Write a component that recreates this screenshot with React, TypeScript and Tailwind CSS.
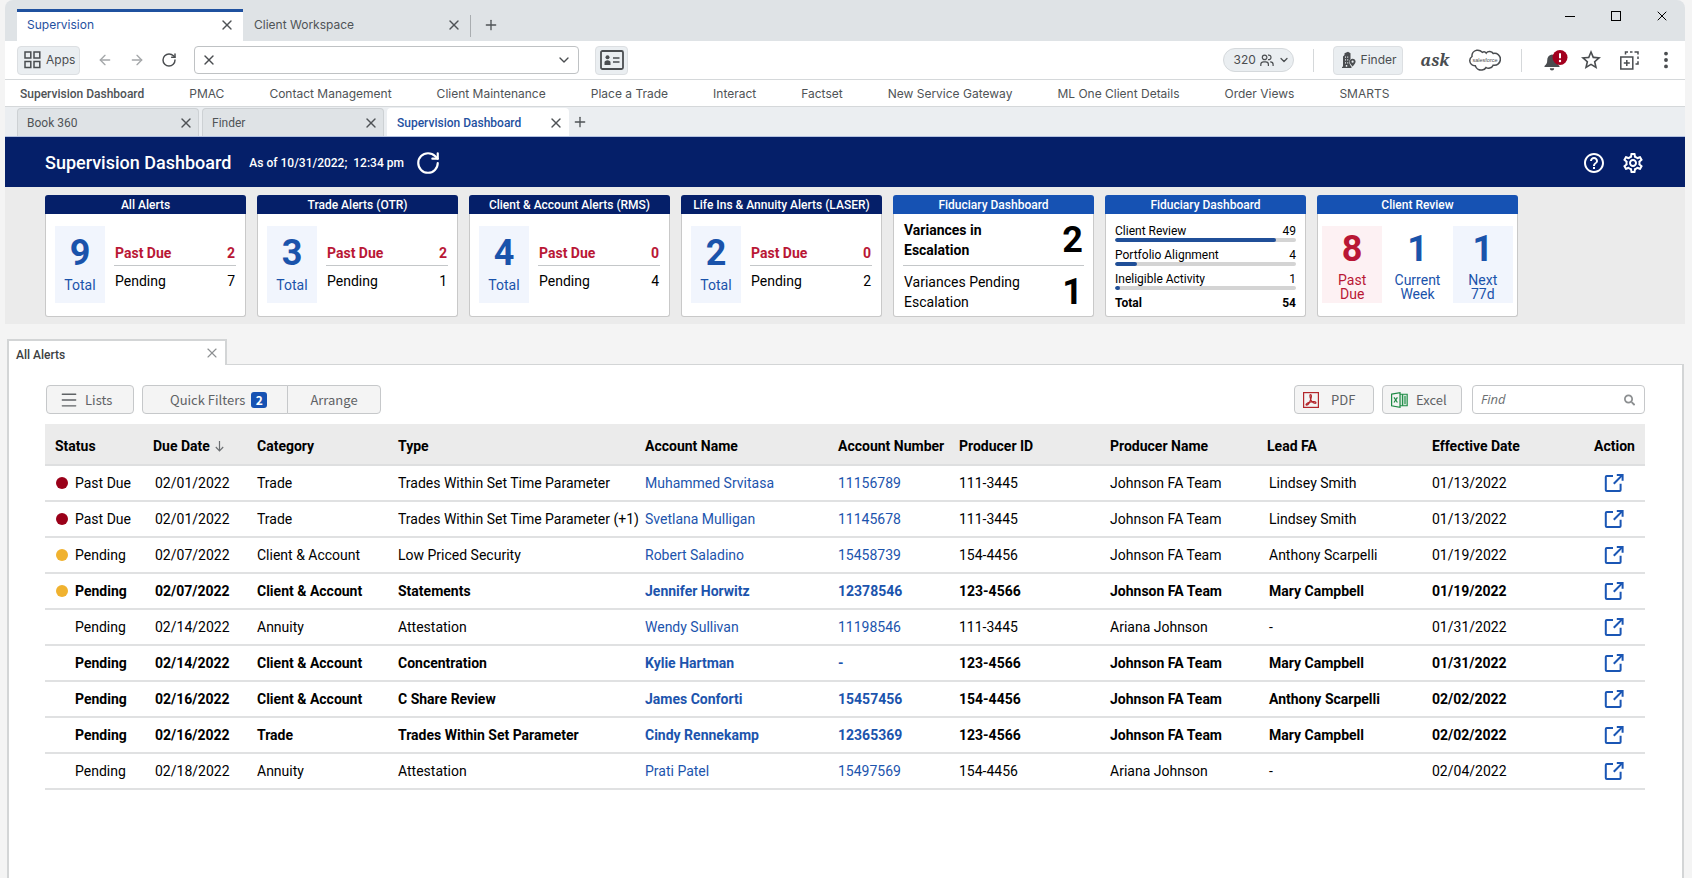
import { useState, type ReactNode } from "react";
import { ArrowLeft, ArrowRight, ChevronDown, Menu, MoreVertical, Plus, RotateCw, X } from "lucide-react";
import { MdHelpOutline, MdOutlineSettings, MdStarBorder } from "react-icons/md";
import { FaSearch } from "react-icons/fa";

interface AlertSummary {
  title: string;
  total: number;
  pastDue: number;
  pending: number;
}

interface AlertRow {
  status: "Past Due" | "Pending";
  dot?: "red" | "amber";
  due: string;
  category: string;
  type: string;
  account: string;
  number: string;
  producerId: string;
  producer: string;
  lead: string;
  effective: string;
  unread?: boolean;
}

const NAV_LINKS = [
  "Supervision Dashboard",
  "PMAC",
  "Contact Management",
  "Client Maintenance",
  "Place a Trade",
  "Interact",
  "Factset",
  "New Service Gateway",
  "ML One Client Details",
  "Order Views",
  "SMARTS",
];

const PAGE_TABS = ["Book 360", "Finder", "Supervision Dashboard"];

const SUMMARIES: AlertSummary[] = [
  { title: "All Alerts", total: 9, pastDue: 2, pending: 7 },
  { title: "Trade Alerts (OTR)", total: 3, pastDue: 2, pending: 1 },
  { title: "Client & Account Alerts (RMS)", total: 4, pastDue: 0, pending: 4 },
  { title: "Life Ins & Annuity Alerts (LASER)", total: 2, pastDue: 0, pending: 2 },
];

const FIDUCIARY_BARS = [
  { label: "Client Review", value: 49, percent: 89 },
  { label: "Portfolio Alignment", value: 4, percent: 12 },
  { label: "Ineligible Activity", value: 1, percent: 3 },
];

const REVIEW_TILES = [
  { value: 8, lines: ["Past", "Due"], tone: "bg-[#fdf1f3] text-[#b91735]" },
  { value: 1, lines: ["Current", "Week"], tone: "text-[#1a53ab]" },
  { value: 1, lines: ["Next", "77d"], tone: "bg-[#f1f5fd] text-[#1a53ab]" },
];

const COLUMNS = [
  { label: "Status", width: "w-[98px]" },
  { label: "Due Date", width: "w-[104px]" },
  { label: "Category", width: "w-[141px]" },
  { label: "Type", width: "w-[247px]" },
  { label: "Account Name", width: "w-[193px]" },
  { label: "Account Number", width: "w-[121px]" },
  { label: "Producer ID", width: "w-[151px]" },
  { label: "Producer Name", width: "w-[157px]" },
  { label: "Lead FA", width: "w-[165px]" },
  { label: "Effective Date", width: "w-[162px]" },
  { label: "Action", width: "w-[61px]" },
];

const ROWS: AlertRow[] = [
  { status: "Past Due", dot: "red", due: "02/01/2022", category: "Trade", type: "Trades Within Set Time Parameter", account: "Muhammed Srvitasa", number: "11156789", producerId: "111-3445", producer: "Johnson FA Team", lead: "Lindsey Smith", effective: "01/13/2022" },
  { status: "Past Due", dot: "red", due: "02/01/2022", category: "Trade", type: "Trades Within Set Time Parameter (+1)", account: "Svetlana Mulligan", number: "11145678", producerId: "111-3445", producer: "Johnson FA Team", lead: "Lindsey Smith", effective: "01/13/2022" },
  { status: "Pending", dot: "amber", due: "02/07/2022", category: "Client & Account", type: "Low Priced Security", account: "Robert Saladino", number: "15458739", producerId: "154-4456", producer: "Johnson FA Team", lead: "Anthony Scarpelli", effective: "01/19/2022" },
  { status: "Pending", dot: "amber", due: "02/07/2022", category: "Client & Account", type: "Statements", account: "Jennifer Horwitz", number: "12378546", producerId: "123-4566", producer: "Johnson FA Team", lead: "Mary Campbell", effective: "01/19/2022", unread: true },
  { status: "Pending", due: "02/14/2022", category: "Annuity", type: "Attestation", account: "Wendy Sullivan", number: "11198546", producerId: "111-3445", producer: "Ariana Johnson", lead: "-", effective: "01/31/2022" },
  { status: "Pending", due: "02/14/2022", category: "Client & Account", type: "Concentration", account: "Kylie Hartman", number: "-", producerId: "123-4566", producer: "Johnson FA Team", lead: "Mary Campbell", effective: "01/31/2022", unread: true },
  { status: "Pending", due: "02/16/2022", category: "Client & Account", type: "C Share Review", account: "James Conforti", number: "15457456", producerId: "154-4456", producer: "Johnson FA Team", lead: "Anthony Scarpelli", effective: "02/02/2022", unread: true },
  { status: "Pending", due: "02/16/2022", category: "Trade", type: "Trades Within Set Parameter", account: "Cindy Rennekamp", number: "12365369", producerId: "123-4566", producer: "Johnson FA Team", lead: "Mary Campbell", effective: "02/02/2022", unread: true },
  { status: "Pending", due: "02/18/2022", category: "Annuity", type: "Attestation", account: "Prati Patel", number: "15497569", producerId: "154-4456", producer: "Ariana Johnson", lead: "-", effective: "02/04/2022" },
];

function AppsIcon() {
  return (
    <svg width="17" height="18" viewBox="0 0 17 18" fill="none" stroke="currentColor" strokeWidth="1.5">
      <rect x="1" y="1" width="5.8" height="6" />
      <rect x="10" y="1" width="5.8" height="6" />
      <rect x="1" y="10.5" width="5.8" height="6" />
      <rect x="10" y="10.5" width="5.8" height="6" />
    </svg>
  );
}

function ContactCardIcon() {
  return (
    <svg width="24" height="20" viewBox="0 0 24 20" fill="none" stroke="currentColor">
      <rect x="1" y="1" width="22" height="18" rx="1.5" strokeWidth="1.8" />
      <path d="M13 8h6.5M13 12h6.5" strokeWidth="1.6" />
      <circle cx="7.5" cy="7.2" r="2" fill="currentColor" stroke="none" />
      <path d="M4.5 15v-2.4c0-1.4 1.2-2.3 3-2.3s3 .9 3 2.3V15z" fill="currentColor" stroke="none" />
    </svg>
  );
}

function PeopleIcon() {
  return (
    <svg width="14" height="13" viewBox="0 0 14 13" fill="none" stroke="currentColor" strokeWidth="1.2">
      <circle cx="4.6" cy="3.4" r="2.3" />
      <path d="M.8 12v-1.5c0-1.7 1.2-2.7 2.700-2.700h2.200c1.500 0 2.700 1 2.700 2.700V12" />
      <path d="M8 1.200c1.600-.4 3 .7 3 2.200S9.700 6 8 5.600M10.200 7.800c1.700 0 2.900 1.200 2.900 2.700V12" />
    </svg>
  );
}

function BuildingPinIcon() {
  return (
    <svg width="14" height="18" viewBox="0 0 14 18" fill="currentColor">
      <path
        fillRule="evenodd"
        d="M1 5.500 2.500 4V2.200L6 .800l2.500 1.400v5.900a4 4 0 0 0-1.200 3.100c0 1.500 1 3 2.200 4.600V17H0v-1.300h1zM3 5.500h1v1.300H3zm2.200 0h1v1.300h-1zM3 8.300h1v1.300H3zm2.200 0h1v1.300h-1zM3 11.200h1v1.300H3zm2.200 0h1v1.300h-1zM3.800 14h1.400v1.800H3.800z"
      />
      <path
        fillRule="evenodd"
        d="M10.600 7.700c1.700 0 3 1.300 3 2.900 0 1.800-1.500 3.400-3 5-1.500-1.600-3-3.200-3-5 0-1.600 1.300-2.900 3-2.900zm0 1.900a1.100 1.100 0 1 0 0 2.200 1.100 1.100 0 0 0 0-2.200z"
      />
    </svg>
  );
}

function SalesforceLogo() {
  return (
    <svg width="32" height="23" viewBox="0 0 32 23" fill="none">
      <path
        d="M13.300 3.300C11.900 1.800 9.800.900 7.700 1.300 4.600 1.900 2.700 4.600 3 7.500 1.500 8.500.600 10.100.800 12c.200 2.900 2.600 5 5.500 4.700.900 2.700 3.700 4.700 6.800 4.300 1.700-.200 3.200-1.200 4-2.500 1 .700 2.300.900 3.600.600 1.700-.400 2.900-1.500 3.500-2.900 4 .600 7.200-2.100 7.200-6.100 0-3.800-3.400-6.500-7.200-5.600C22.900 2.300 19 1.700 17.200 4.100 16.200 2.600 14.700 2.400 13.300 3.300z"
        stroke="currentColor"
        strokeWidth="1.5"
      />
      <text x="16" y="12.5" textAnchor="middle" fontSize="5.5" fontFamily="Liberation Sans" fill="currentColor">
        salesforce
      </text>
    </svg>
  );
}

function BellIcon() {
  return (
    <svg width="24" height="21" viewBox="0 0 24 21">
      <path d="M8 4.500c-3.300.500-4.800 3-4.800 6 0 2.600-.700 3.800-2.700 5.500v1h15v-1c-2-1.700-2.700-2.900-2.700-5.500 0-3-1.500-5.500-4.800-6z" fill="#4a4d50" />
      <path d="M5.800 18.200h4.400a2.200 2.200 0 0 1-4.400 0z" fill="#4a4d50" />
      <circle cx="16" cy="7.500" r="7.500" fill="#a3001e" />
      <path d="M16 3.300v5" stroke="#fff" strokeWidth="2" />
      <circle cx="16" cy="11" r="1.200" fill="#fff" />
    </svg>
  );
}

function AddWindowIcon() {
  return (
    <svg width="19" height="19" viewBox="0 0 19 19" fill="none" stroke="currentColor" strokeWidth="1.5">
      <rect x=".8" y="6" width="12" height="12" />
      <path d="M3.800 12h6M6.800 9v6" />
      <path d="M5.500 3.500V1H8M10 1h2.500M14.500 1H18v2.500M18 5.500V8M18 10.200V13h-2.500" />
    </svg>
  );
}

function PdfIcon() {
  return (
    <svg width="16" height="16" viewBox="0 0 16 16" fill="none" stroke="#b3262b">
      <rect x=".6" y=".6" width="14.800" height="14.800" strokeWidth="1.2" />
      <path
        d="M7.500 2.500c1.300 0 1 2.300.400 4.200-.700 2.300-2.300 6.200-4.200 6.400-1.400 0-.700-1.900 3-2.900 3.300-.9 6.300-.7 6.300.5 0 1.100-2.400.800-4-1.100C7.300 7.700 6.200 2.500 7.500 2.500z"
        strokeWidth="1.2"
      />
    </svg>
  );
}

function ExcelIcon() {
  return (
    <svg width="17" height="16" viewBox="0 0 17 16" fill="none" stroke="#1e8a45">
      <path d="M9 2.200h7.200v11.600H9" fill="#cfe6d7" strokeWidth="1.1" />
      <path d="M.6 2.200 9 .700v14.600L.600 13.800z" fill="#f4f4f4" strokeWidth="1.2" />
      <path d="M3 5.300l3.400 5.200M6.400 5.300 3 10.500" strokeWidth="1.2" />
      <path d="M11.600 2.200v11.600M14 4v8" strokeWidth="1.1" />
    </svg>
  );
}

function SortDownIcon() {
  return (
    <svg width="9" height="12" viewBox="0 0 9 12" fill="none" stroke="#6c6f72" strokeWidth="1.2">
      <path d="M4.500 1v9.500M.8 7l3.700 3.800L8.200 7" />
    </svg>
  );
}

function OpenIcon() {
  return (
    <svg width="20" height="20" viewBox="0 0 20 20" fill="none" stroke="#1a56b4" strokeWidth="2">
      <path d="M9 3H2.800c-.6 0-1 .4-1 1v13c0 .6.4 1 1 1h12.800c.6 0 1-.4 1-1v-6.200" />
      <path d="M9.800 10.800 17.800 2.600" />
      <path d="M12.800 1.900h5.800v5.900" />
    </svg>
  );
}

function BrowserBar() {
  return (
    <div className="flex h-[41px] items-end justify-between rounded-t-lg bg-[#dfe3e6] pl-3 pr-[15px] text-[#4f5356]">
      <div className="flex items-end">
        <div className="flex h-8 w-[226px] items-center justify-between border-t-[3px] border-[#1f519f] bg-white pb-1 pl-[10px] pr-2">
          <a href="#supervision" className="text-xs text-[#1f519f]">Supervision</a>
          <button aria-label="Close Supervision"><X className="size-4" strokeWidth={2} /></button>
        </div>
        <div className="flex h-8 w-[227px] items-center justify-between border-t-[3px] border-transparent pb-1 pl-[11px] pr-2">
          <a href="#workspace" className="text-xs">Client Workspace</a>
          <button aria-label="Close Client Workspace"><X className="size-4" strokeWidth={2} /></button>
        </div>
        <div className="mb-1 h-[22px] w-px bg-[#a9adb0]" />
        <button aria-label="New tab" className="mb-2 ml-3"><Plus className="size-4" strokeWidth={2} /></button>
      </div>
      <div className="flex items-center gap-[30px] self-start pt-2 text-black">
        <button aria-label="Minimize" className="flex size-4 items-center justify-center"><span className="h-px w-[10px] bg-black" /></button>
        <button aria-label="Maximize" className="flex size-4 items-center justify-center"><span className="size-[10px] border border-black" /></button>
        <button aria-label="Close window"><X className="size-4" strokeWidth={1.5} /></button>
      </div>
    </div>
  );
}

function Toolbar() {
  return (
    <div className="flex h-[39px] items-center justify-between border-b border-[#d5d8da] bg-white pl-3 pr-2 text-[#4a4d50]">
      <div className="flex items-center">
        <button className="flex h-[29px] w-[63px] items-center gap-[5px] rounded border border-[#dcdfe2] bg-[#eaeef1] pl-[6px] text-xs">
          <AppsIcon />
          Apps
        </button>
        <button aria-label="Back" className="ml-[17px] text-[#a4a7a9]"><ArrowLeft className="size-4" /></button>
        <button aria-label="Forward" className="ml-4 text-[#a4a7a9]"><ArrowRight className="size-4" /></button>
        <button aria-label="Reload" className="ml-4"><RotateCw className="size-4" strokeWidth={2.2} /></button>
        <div className="ml-[17px] flex h-7 w-[385px] items-center rounded border border-[#bfc2c4] px-[6px]">
          <button aria-label="Clear address"><X className="size-4" /></button>
          <input aria-label="Address" className="h-6 flex-1 px-2 text-xs outline-none" />
          <button aria-label="Show history"><ChevronDown className="size-4" /></button>
        </div>
        <button aria-label="Contact card" className="ml-4 flex h-[29px] w-[33px] items-center justify-center rounded border border-[#dcdfe2] bg-[#eaeef1]">
          <ContactCardIcon />
        </button>
      </div>
      <div className="flex items-center">
        <button className="flex h-6 w-[71px] items-center rounded-full border border-[#d5d9dc] bg-[#eaeef1] pl-[10px] text-xs">
          <span className="mr-1">320</span>
          <PeopleIcon />
          <ChevronDown className="ml-1 size-3" strokeWidth={2.5} />
        </button>
        <div className="ml-[19px] h-[23px] w-px bg-[#d5d8da]" />
        <button className="ml-[19px] flex h-[29px] w-[70px] items-center gap-[5px] rounded border border-[#dcdfe2] bg-[#eaeef1] pl-2 text-xs">
          <BuildingPinIcon />
          Finder
        </button>
        <button className="ml-[18px] font-['Noto_Serif','Liberation_Serif',serif] text-base font-bold italic leading-5">ask</button>
        <button aria-label="Salesforce" className="ml-5"><SalesforceLogo /></button>
        <div className="ml-5 h-[23px] w-px bg-[#d5d8da]" />
        <button aria-label="Notifications" className="ml-[22px]"><BellIcon /></button>
        <button aria-label="Favorites" className="ml-[11px]"><MdStarBorder className="size-6" /></button>
        <button aria-label="Add window" className="ml-[17px]"><AddWindowIcon /></button>
        <button aria-label="More" className="ml-4"><MoreVertical className="size-[22px]" strokeWidth={2.2} /></button>
      </div>
    </div>
  );
}

function NavBar() {
  return (
    <nav className="flex h-[27px] items-center gap-[45px] whitespace-nowrap border-b border-[#d5d8da] bg-white pl-[15px] pt-px text-xs text-[#4f5356]">
      {NAV_LINKS.map((label, i) => (
        <a key={label} href="#nav" className={i === 0 ? "font-['Roboto',sans-serif] font-medium" : ""}>
          {label}
        </a>
      ))}
    </nav>
  );
}

function PageTabs() {
  return (
    <div className="flex h-[30px] items-end gap-[3px] border-b border-[#b4c2e0] bg-[#ebeef1] pl-3 font-['Roboto',sans-serif] text-xs text-[#4f5356]">
      {PAGE_TABS.map((label) => {
        const active = label === "Supervision Dashboard";
        const tone = active ? "border-transparent bg-white font-medium text-[#1f519f]" : "border-[#cdd1d4] bg-[#dfe3e6]";
        return (
          <div key={label} className={`flex h-7 w-[182px] items-center justify-between rounded-t border border-b-0 pl-[9px] pr-1 ${tone}`}>
            <a href="#tab">{label}</a>
            <button aria-label={`Close ${label}`} className="text-[#4f5356]"><X className="size-4" /></button>
          </div>
        );
      })}
      <button aria-label="Open tab" className="mb-[6px]"><Plus className="size-4" /></button>
    </div>
  );
}

function PageHeader() {
  return (
    <header className="flex h-[50px] items-center justify-between bg-[#051f69] px-10 pt-[2px] text-white">
      <div className="flex items-center">
        <h1 className="text-lg font-medium">Supervision Dashboard</h1>
        <span className="ml-[18px] whitespace-pre text-xs font-medium">As of 10/31/2022;  12:34 pm</span>
        <button aria-label="Refresh" className="ml-[11px]"><RotateCw className="size-[26px]" strokeWidth={2} /></button>
      </div>
      <div className="flex items-center gap-[15px]">
        <button aria-label="Help"><MdHelpOutline className="size-6" /></button>
        <button aria-label="Settings"><MdOutlineSettings className="size-6" /></button>
      </div>
    </header>
  );
}

function Card({ title, light, children }: { title: string; light?: boolean; children: ReactNode }) {
  return (
    <section className="flex h-[122px] w-[201px] shrink-0 flex-col">
      <h2 className={`flex h-[19px] shrink-0 items-center justify-center whitespace-nowrap rounded-t-[3px] pt-px text-xs font-medium text-white ${light ? "bg-[#1652b3]" : "bg-[#051f69]"}`}>
        {title}
      </h2>
      <div className="grow rounded-b-[3px] border border-t-0 border-[#c9c9c9] bg-white">{children}</div>
    </section>
  );
}

function SummaryCard({ title, total, pastDue, pending }: AlertSummary) {
  return (
    <Card title={title}>
      <div className="flex gap-[9px] px-[9px] pt-3">
        <div className="flex h-[77px] w-[50px] flex-col items-center bg-[#f1f5fd] pt-[11px] text-[#1a53ab]">
          <span className="text-4xl font-bold leading-8">{total}</span>
          <span className="pt-2 text-sm leading-4">Total</span>
        </div>
        <div className="flex-1 pt-3 text-sm">
          <div className="flex h-7 items-center justify-between border-b border-[#c4c7c9] px-px pt-[2px] font-bold text-[#b91735]">
            <span>Past Due</span>
            <span>{pastDue}</span>
          </div>
          <div className="flex h-7 items-center justify-between px-px pt-[2px] text-black">
            <span>Pending</span>
            <span>{pending}</span>
          </div>
        </div>
      </div>
    </Card>
  );
}

function SummaryStrip() {
  return (
    <div className="flex gap-[11px] bg-[#ebebeb] px-10 pb-[7px] pt-2">
      {SUMMARIES.map((item) => (
        <SummaryCard key={item.title} {...item} />
      ))}
      <Card title="Fiduciary Dashboard" light>
        <div className="mx-[9px] flex flex-col text-sm leading-5 text-black">
          <div className="flex h-[52px] items-center justify-between border-b border-[#c4c7c9] px-px pt-px font-bold">
            <span className="w-24">Variances in Escalation</span>
            <span className="text-4xl">2</span>
          </div>
          <div className="flex h-[50px] items-center justify-between px-px pt-px">
            <span className="w-32">Variances Pending Escalation</span>
            <span className="text-4xl font-bold">1</span>
          </div>
        </div>
      </Card>
      <Card title="Fiduciary Dashboard" light>
        <div className="px-[9px] pt-[10px] text-xs text-black">
          {FIDUCIARY_BARS.map((bar) => (
            <div key={bar.label} className="h-6">
              <div className="flex justify-between leading-[14px]">
                <span>{bar.label}</span>
                <span>{bar.value}</span>
              </div>
              <div className="h-1 overflow-hidden rounded-full bg-[#d4d4d4]">
                <div className="h-1 rounded-full bg-[#204f98]" style={{ width: `${bar.percent}%` }} />
              </div>
            </div>
          ))}
          <div className="flex justify-between font-bold leading-[14px]">
            <span>Total</span>
            <span>54</span>
          </div>
        </div>
      </Card>
      <Card title="Client Review" light>
        <div className="grid grid-cols-3 gap-[5px] px-1 pt-3">
          {REVIEW_TILES.map((tile) => (
            <div key={tile.lines[0]} className={`flex h-[77px] flex-col items-center pt-[7px] ${tile.tone}`}>
              <span className="text-4xl font-bold leading-8">{tile.value}</span>
              {tile.lines.map((line, i) => (
                <span key={line} className={`text-sm leading-[14px] ${i === 0 ? "mt-2" : ""}`}>{line}</span>
              ))}
            </div>
          ))}
        </div>
      </Card>
    </div>
  );
}

function Actions() {
  const [query, setQuery] = useState("");
  const button = "flex items-center border border-[#c6c8ca] bg-[#f4f4f4]";
  return (
    <div className="flex items-center justify-between font-['Noto_Sans_CJK_SC','Open_Sans',sans-serif] text-[13px] text-[#5f6265]">
      <div className="flex pl-px">
        <button className={`${button} h-[29px] w-[88px] gap-[6px] rounded pl-3`}>
          <Menu className="size-5" strokeWidth={1.7} />
          Lists
        </button>
        <button className={`${button} ml-2 h-[29px] w-[146px] gap-[6px] rounded-l pl-[27px]`}>
          Quick Filters
          <span className="flex size-4 items-center justify-center rounded-[3px] bg-[#1652b3] text-xs font-bold text-white">2</span>
        </button>
        <button className={`${button} -ml-px h-[29px] w-[94px] justify-center rounded-r`}>Arrange</button>
      </div>
      <div className="flex gap-2">
        <button className={`${button} h-[29px] w-20 gap-3 rounded pl-2`}>
          <PdfIcon />
          PDF
        </button>
        <button className={`${button} h-[29px] w-20 gap-2 rounded pl-2`}>
          <ExcelIcon />
          Excel
        </button>
        <label className="ml-[2px] flex h-[29px] w-[173px] items-center rounded border border-[#c6c8ca] bg-white pl-2 pr-[9px]">
          <input
            value={query}
            onChange={(e) => setQuery(e.target.value)}
            placeholder="Find"
            aria-label="Find"
            className="w-full min-w-0 font-['Open_Sans',sans-serif] italic outline-none placeholder:text-[#6c6f72]"
          />
          <FaSearch className="size-3 text-[#8c8f91]" />
        </label>
      </div>
    </div>
  );
}

function AlertsTable() {
  return (
    <table className="mt-[10px] w-full table-fixed border-collapse text-left text-sm text-black">
      <thead>
        <tr className="h-[41px] border-b-2 border-[#dedfe0] bg-[#ebebeb]">
          {COLUMNS.map((col) => (
            <th key={col.label} className={`whitespace-nowrap pl-[10px] pt-1 font-bold ${col.width}`}>
              <span className="flex items-center gap-[5px]">
                {col.label}
                {col.label === "Due Date" && <SortDownIcon />}
              </span>
            </th>
          ))}
        </tr>
      </thead>
      <tbody>
        {ROWS.map((row, i) => (
          <tr key={i} className={`h-9 whitespace-nowrap border-b-2 border-[#e0e1e2] ${row.unread ? "font-bold" : ""}`}>
            <td className="pl-[11px]">
              <span className="flex items-center gap-[7px]">
                <span className={`size-3 rounded-full ${row.dot === "red" ? "bg-[#9a0019]" : row.dot === "amber" ? "bg-[#f0b22f]" : ""}`} />
                {row.status}
              </span>
            </td>
            <td className="pl-3">{row.due}</td>
            <td className="pl-[10px]">{row.category}</td>
            <td className="pl-[10px]">{row.type}</td>
            <td className="pl-[10px]"><a href="#account" className="text-[#1c54ad]">{row.account}</a></td>
            <td className="pl-[10px]"><a href="#number" className="text-[#1c54ad]">{row.number}</a></td>
            <td className="pl-[10px]">{row.producerId}</td>
            <td className="pl-[10px]">{row.producer}</td>
            <td className="pl-3">{row.lead}</td>
            <td className="pl-[10px]">{row.effective}</td>
            <td className="pl-5">
              <button aria-label={`Open ${row.account}`} className="block"><OpenIcon /></button>
            </td>
          </tr>
        ))}
      </tbody>
    </table>
  );
}

export default function App() {
  return (
    <div className="flex min-h-screen flex-col bg-[#f4f4f4] pl-[5px] pr-[7px] font-['Roboto',sans-serif]">
      <div className="font-['Inter',sans-serif]">
        <BrowserBar />
        <Toolbar />
        <NavBar />
        <PageTabs />
      </div>
      <PageHeader />
      <SummaryStrip />
      <main className="ml-[2px] mr-px mt-[15px] flex grow flex-col">
        <div className="z-10 -mb-px flex h-[26px] w-[220px] items-center justify-between border-2 border-b-0 border-[#d3d5d6] bg-white pl-[7px] pr-[5px] text-xs font-medium text-[#3c3f42]">
          <span className="pt-[3px]">All Alerts</span>
          <button aria-label="Close All Alerts" className="text-[#8c8f91]"><X className="size-4" strokeWidth={1.7} /></button>
        </div>
        <div className="grow border-x-2 border-t border-[#d3d5d6] bg-white pl-9 pr-[37px] pt-5">
          <Actions />
          <AlertsTable />
        </div>
      </main>
    </div>
  );
}
